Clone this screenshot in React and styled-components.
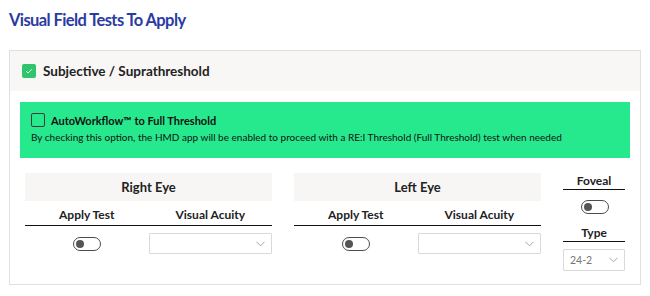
import React from "react";
import styled, { createGlobalStyle } from "styled-components";

const Global = createGlobalStyle`
  html, body { margin: 0; padding: 0; background: #fff; }
  body { font-family: Lato, "Open Sans", sans-serif; color: #1f1f1f; }
`;

const Page = styled.div`
  width: 650px;
  height: 296px;
  padding: 8px 9px 0 9px;
  box-sizing: border-box;
`;

const Title = styled.h1`
  margin: 0;
  height: 42px;
  font-size: 16.5px;
  line-height: 24px;
  font-weight: 700;
  letter-spacing: -0.6px;
  color: #2a3ca2;
`;

const Card = styled.section`
  width: 632px;
  height: 235px;
  box-sizing: border-box;
  border: 1px solid #e0e0e0;
  background: #fff;
`;

const CardHeader = styled.div`
  height: 40px;
  background: #f8f7f5;
  display: flex;
  align-items: center;
  gap: 7px;
  padding-left: 12px;
  font-size: 13.5px;
  font-weight: 700;
  color: #222;
`;

const CheckBox = styled.span`
  width: 14px;
  height: 14px;
  box-sizing: border-box;
  border-radius: 2px;
  display: inline-flex;
  align-items: center;
  justify-content: center;
  flex: none;
  background: ${(p) => (p.$checked ? "#2ec56c" : "transparent")};
  border: ${(p) => (p.$checked ? "none" : "1px solid #3a3a3a")};
`;

const CardBody = styled.div`
  padding: 11px 10px 0 10px;
`;

const Banner = styled.div`
  height: 56px;
  background: #26e98e;
  box-sizing: border-box;
  padding: 11px 11px 0 11px;
`;

const BannerTop = styled.div`
  display: flex;
  align-items: center;
  gap: 6px;
  font-size: 11px;
  font-weight: 700;
  color: #111;
  height: 14px;
`;

const BannerText = styled.div`
  margin-top: 3px;
  font-size: 10px;
  line-height: 14px;
  color: #111;
`;

const Sections = styled.div`
  margin-top: 15px;
  padding-left: 5px;
  display: grid;
  grid-template-columns: 247px 247px 62px;
  column-gap: 22px;
`;

const EyeHeader = styled.div`
  height: 28px;
  background: #f7f6f4;
  display: flex;
  align-items: center;
  justify-content: center;
  font-size: 13px;
  font-weight: 700;
  color: #222;
`;

const ColHeads = styled.div`
  display: grid;
  grid-template-columns: 1fr 1fr;
  border-bottom: 1px solid #111;
  height: 24px;
`;

const ColHead = styled.div`
  display: flex;
  align-items: center;
  justify-content: center;
  font-size: 12px;
  font-weight: 700;
  color: #222;
  padding-top: 3px;
`;

const Controls = styled.div`
  display: grid;
  grid-template-columns: 1fr 1fr;
  padding-top: 7px;
  align-items: center;
`;

const Cell = styled.div`
  display: flex;
  justify-content: center;
`;

const Toggle = styled.span`
  position: relative;
  display: inline-block;
  width: 28px;
  height: 14px;
  box-sizing: border-box;
  border: 1px solid #4d4d4d;
  border-radius: 8px;
  background: #fff;
  &::after {
    content: "";
    position: absolute;
    left: 2px;
    top: 2px;
    width: 8px;
    height: 8px;
    border-radius: 50%;
    background: #555;
  }
`;

const Select = styled.div`
  width: ${(p) => p.$w || "123px"};
  height: ${(p) => p.$h || "21px"};
  box-sizing: border-box;
  border: 1px solid #d9d9d9;
  border-radius: 1px;
  display: flex;
  align-items: center;
  justify-content: space-between;
  padding: 0 6px 0 6px;
  font-size: 10.5px;
  color: #777;
  background: #fff;
`;

const SelectCell = styled.div`
  display: flex;
  justify-content: flex-end;
`;

const SideCol = styled.div`
  display: flex;
  flex-direction: column;
  align-items: stretch;
`;

const SideHead = styled.div`
  height: 14px;
  border-bottom: 1px solid #111;
  display: flex;
  align-items: center;
  justify-content: center;
  font-size: 12px;
  font-weight: 700;
  color: #222;
  padding-bottom: 2px;
  margin-top: ${(p) => p.$mt || "0px"};
`;

const SideToggle = styled.div`
  display: flex;
  justify-content: center;
  margin-top: 10px;
  padding-left: 2px;
`;

const TypeSelect = styled(Select)`
  margin-top: 7px;
`;

const Chevron = () => (
  <svg width="9" height="6" viewBox="0 0 9 6" fill="none">
    <path d="M0.5 0.8 L4.5 4.8 L8.5 0.8" stroke="#9a9a9a" strokeWidth="0.9" />
  </svg>
);

const Check = () => (
  <svg width="10" height="10" viewBox="0 0 10 10" fill="none">
    <path d="M2.2 5.2 L4.1 7 L7.9 3.2" stroke="#e8f8ee" strokeWidth="1" />
  </svg>
);

const Eye = ({ title }) => (
  <div>
    <EyeHeader>{title}</EyeHeader>
    <ColHeads>
      <ColHead>Apply Test</ColHead>
      <ColHead>Visual Acuity</ColHead>
    </ColHeads>
    <Controls>
      <Cell>
        <Toggle />
      </Cell>
      <SelectCell>
        <Select>
          <span />
          <Chevron />
        </Select>
      </SelectCell>
    </Controls>
  </div>
);

export default function App() {
  return (
    <Page>
      <Global />
      <Title>Visual Field Tests To Apply</Title>
      <Card>
        <CardHeader>
          <CheckBox $checked>
            <Check />
          </CheckBox>
          Subjective / Suprathreshold
        </CardHeader>
        <CardBody>
          <Banner>
            <BannerTop>
              <CheckBox />
              AutoWorkflow™ to Full Threshold
            </BannerTop>
            <BannerText>
              By checking this option, the HMD app will be enabled to proceed with a RE:I Threshold (Full Threshold) test when needed
            </BannerText>
          </Banner>
          <Sections>
            <Eye title="Right Eye" />
            <Eye title="Left Eye" />
            <SideCol>
              <SideHead>Foveal</SideHead>
              <SideToggle>
                <Toggle />
              </SideToggle>
              <SideHead $mt="11px">Type</SideHead>
              <TypeSelect $w="62px" $h="22px">
                <span>24-2</span>
                <Chevron />
              </TypeSelect>
            </SideCol>
          </Sections>
        </CardBody>
      </Card>
    </Page>
  );
}
